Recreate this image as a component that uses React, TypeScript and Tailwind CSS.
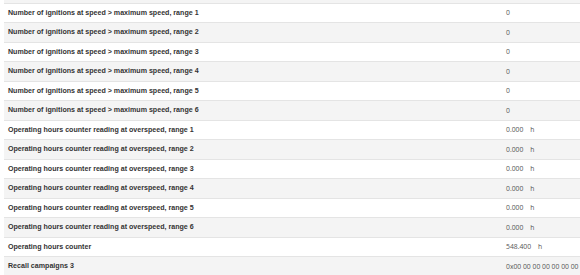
const rows = [
  { label: "Number of ignitions at speed > maximum speed, range 1", value: "0" },
  { label: "Number of ignitions at speed > maximum speed, range 2", value: "0" },
  { label: "Number of ignitions at speed > maximum speed, range 3", value: "0" },
  { label: "Number of ignitions at speed > maximum speed, range 4", value: "0" },
  { label: "Number of ignitions at speed > maximum speed, range 5", value: "0" },
  { label: "Number of ignitions at speed > maximum speed, range 6", value: "0" },
  { label: "Operating hours counter reading at overspeed, range 1", value: "0.000", unit: "h" },
  { label: "Operating hours counter reading at overspeed, range 2", value: "0.000", unit: "h" },
  { label: "Operating hours counter reading at overspeed, range 3", value: "0.000", unit: "h" },
  { label: "Operating hours counter reading at overspeed, range 4", value: "0.000", unit: "h" },
  { label: "Operating hours counter reading at overspeed, range 5", value: "0.000", unit: "h" },
  { label: "Operating hours counter reading at overspeed, range 6", value: "0.000", unit: "h" },
  { label: "Operating hours counter", value: "548.400", unit: "h" },
  { label: "Recall campaigns 3", value: "0x00 00 00 00 00 00 00 00" },
];

export default function App() {
  return (
    <div className="w-[580px] h-[275px] overflow-hidden bg-white pl-[4px] font-['Liberation_Sans',Arial,sans-serif]">
      {/* tail of the previous row */}
      <div className="h-[3.5px] bg-[#f4f4f4] border-b border-[#e4e4e4]" />
      {rows.map((row, i) => (
        <div
          key={row.label}
          className={`flex items-center h-[19.5px] border-b border-[#e4e4e4] whitespace-nowrap ${i % 2 === 0 ? "bg-white" : "bg-[#f4f4f4]"}`}
        >
          <div className="w-[502px] shrink-0 pl-[4px] pt-px text-[7.1px] font-bold text-[#333]">{row.label}</div>
          <div className="pt-px text-[6.8px] text-[#555] font-['Open_Sans',sans-serif]">
            {row.value}
            {row.unit && <span className="ml-[7px]">{row.unit}</span>}
          </div>
        </div>
      ))}
    </div>
  );
}
